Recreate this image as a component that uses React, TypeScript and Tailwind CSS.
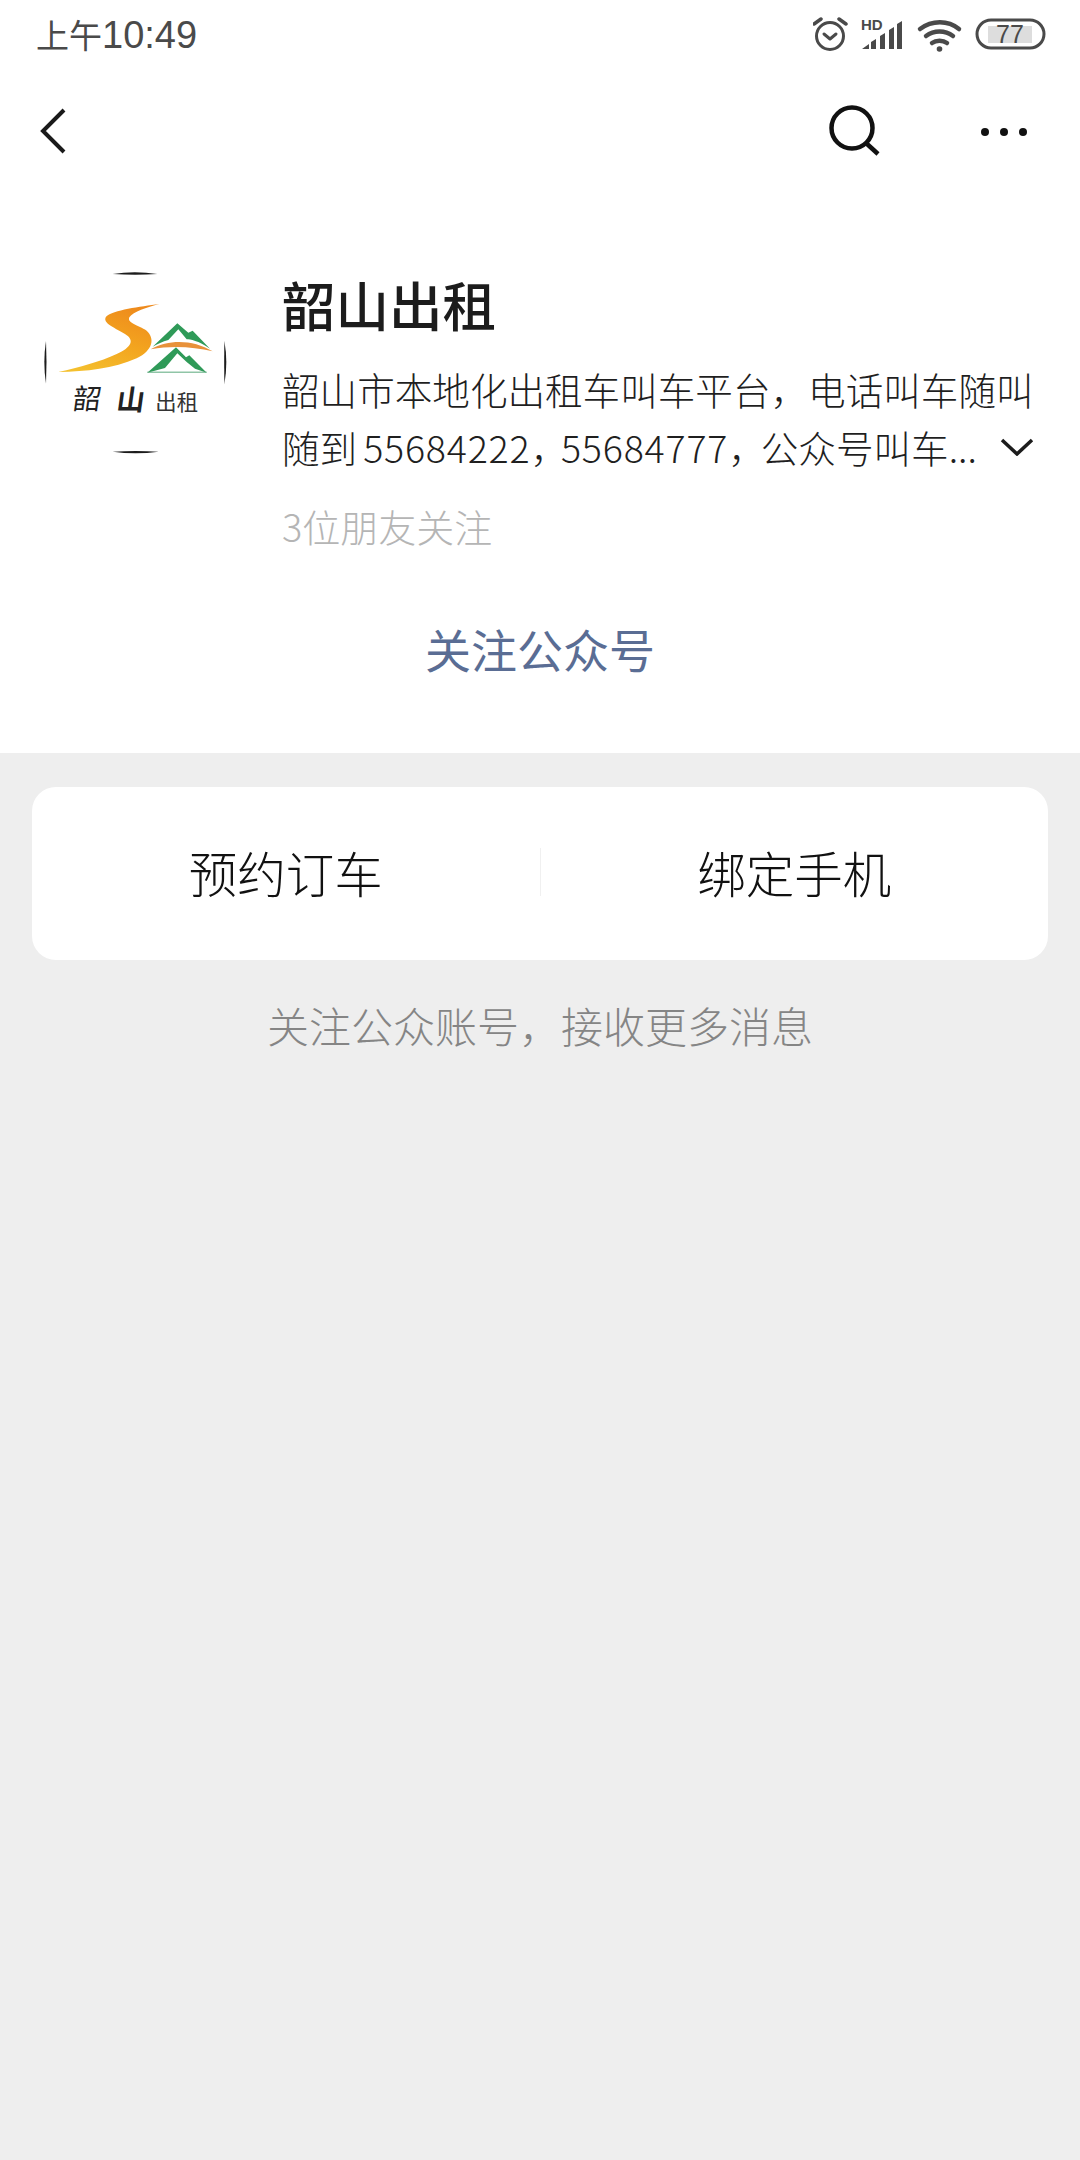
const cjk = "font-['Noto_Sans_CJK_SC','Noto_Sans',sans-serif]";

const StatusIcons = () => (
  <svg width="235" height="36" viewBox="0 0 235 36" className="block">
    {/* alarm */}
    <g fill="none" stroke="#4a4a4a" strokeWidth="3">
      <circle cx="17" cy="20" r="13.500" />
      <path d="M11 18l6 5 6-5" strokeLinecap="round" strokeLinejoin="round" />
      <path d="M1 8l7-5M33 8l-7-5" strokeWidth="3.500" strokeLinecap="round" />
    </g>
    {/* hd + signal */}
    <text x="48" y="14" fontFamily="Liberation Sans" fontWeight="700" fontSize="15" fill="#4a4a4a">HD</text>
    <path d="M49 33l7-5v5zM58 26l5-3v10h-5zM67 20l5-3v16h-5zM76 14l5-3v22h-5zM84 8l5-3v28h-5z" fill="#4a4a4a" />
    {/* wifi */}
    <g fill="none" stroke="#4a4a4a" strokeWidth="4.500" strokeLinecap="round">
      <path d="M107 13c12-9 28-9 39 0" />
      <path d="M113 20c8-6 19-6 27 0" />
      <path d="M119 27c4-3 11-3 15 0" />
    </g>
    <circle cx="126.500" cy="33" r="2.800" fill="#4a4a4a" />
    {/* battery */}
    <rect x="164" y="4" width="67" height="28" rx="14" fill="none" stroke="#4a4a4a" strokeWidth="3" />
    <rect x="175" y="10" width="44" height="17" fill="#dddddd" />
    <text x="197" y="27" textAnchor="middle" fontFamily="Liberation Sans" fontSize="25" fill="#4a4a4a">77</text>
  </svg>
);

const Logo = () => (
  <svg width="210" height="210" viewBox="0 0 630 630" className="block shrink-0">
    <defs>
      <linearGradient id="road" x1="0.700" y1="0" x2="0.200" y2="1">
        <stop offset="0" stopColor="#ee8a1c" />
        <stop offset="0.500" stopColor="#f3a51f" />
        <stop offset="1" stopColor="#f4c02e" />
      </linearGradient>
    </defs>
    <g fill="#1c1c1c">
      <path d="M248 42q66-10 134 0q-66 5-134 0z" />
      <path d="M248 575q68 10 138 0q-68-4-138 0z" />
      <path d="M48 243q-10 64 0 128q3-64 0-128z" />
      <path d="M583 243q12 64 0 130q-1-66 0-130z" />
    </g>
    <path d="M388 132C330 140 250 150 228 170C215 190 260 205 285 222C315 240 305 262 260 282C210 305 150 322 85 336C170 335 250 326 320 295C370 270 375 235 350 212C325 195 290 190 298 172C310 155 350 142 388 132z" fill="url(#road)" />
    <path d="M362 268C420 236 490 240 548 274C490 260 425 256 362 268z" fill="#e8913a" />
    <path d="M368 260L442 190L475 218L488 212L540 266C505 242 480 238 470 238L445 208L415 240C398 245 382 252 368 260z" fill="#2f9a58" />
    <path d="M352 338L438 262L468 292L478 286L530 338L495 326L470 306L442 280L405 324z" fill="#2f9a58" />
    <rect x="352" y="335" width="178" height="3" fill="#5aa97c" />
    <text x="126" y="448" fontFamily="Noto Sans CJK SC, sans-serif" fontSize="84" fill="#222222" transform="skewX(-8) translate(62 0)">韶</text>
    <text x="258" y="450" fontFamily="Noto Sans CJK SC, sans-serif" fontWeight="700" fontSize="84" fill="#222222" transform="skewX(-8) translate(62 0)">山</text>
    <text x="376" y="450" fontFamily="Noto Sans CJK SC, sans-serif" fontSize="64" fill="#333333">出租</text>
  </svg>
);

const App = () => {
  return (
    <div className={`w-[1080px] h-[2160px] bg-[#eeeeee] ${cjk}`}>
      <div className="bg-white h-[753px]">
        <div className="h-[68px] flex items-center justify-between pl-[36px] pr-[32px]">
          <span className="text-[33px] leading-[68px] text-[#4a4a4a]">
            上午<span className="font-['Liberation_Sans',sans-serif] text-[38px]">10:49</span>
          </span>
          <StatusIcons />
        </div>
        <div className="mt-[35px] h-[56px] flex items-center justify-between pl-[40px] pr-[53px]">
          <svg width="26" height="46" viewBox="0 0 26 46" fill="none" stroke="#1a1a1a" strokeWidth="4">
            <path d="M24 2L3 23l21 21" />
          </svg>
          <div className="flex items-center gap-[100px]">
            <svg width="52" height="52" viewBox="0 0 52 52" fill="none" stroke="#111111" strokeWidth="4.500">
              <circle cx="23" cy="23" r="20.500" />
              <path d="M37 38l12 11" />
            </svg>
            <svg width="46" height="10" viewBox="0 0 46 10" fill="#111111" className="mt-[2px]">
              <circle cx="4" cy="5" r="4" />
              <circle cx="23" cy="5" r="4" />
              <circle cx="42" cy="5" r="4" />
            </svg>
          </div>
        </div>
        <div className="flex pl-[30px] pr-[46px] pt-[101px]">
          <Logo />
          <div className="ml-[42px] flex-1 mt-[14px]">
            <h1 className="text-[53.500px] leading-[60px] font-medium text-[#1c1c1c]">韶山出租</h1>
            <div className="mt-[26px] text-[37.600px] leading-[58px] font-light text-[#1f1f1f] whitespace-nowrap">
              <p>韶山市本地化出租车叫车平台，电话叫车随叫</p>
              <div className="flex items-center justify-between">
                <p>
                  随到<span className="ml-[6px] tracking-[0.800px]">55684222</span>
                  <span className="tracking-[-7px]">，</span>
                  <span className="tracking-[0.800px]">55684777</span>
                  <span className="tracking-[-5px]">，</span>
                  公众号叫车...
                </p>
                <svg width="34" height="18" viewBox="0 0 34 18" fill="none" stroke="#1c1c1c" strokeWidth="3.500">
                  <path d="M2 2l15 14L32 2" />
                </svg>
              </div>
            </div>
            <p className="mt-[22px] text-[38px] leading-[56px] font-light text-[#b5b5b5]">3位朋友关注</p>
          </div>
        </div>
        <p className="text-center text-[46px] leading-[60px] text-[#5a6d94] mt-[64px]">关注公众号</p>
      </div>

      <div className="mx-[32px] mt-[34px] h-[173px] pb-[4px] bg-white rounded-[24px] flex items-center">
        <button className="flex-1 text-[48.500px] leading-[60px] font-light text-[#111111] text-center">预约订车</button>
        <div className="w-px h-[48px] bg-[#f0f0f0]" />
        <button className="flex-1 text-[48.500px] leading-[60px] font-light text-[#111111] text-center">绑定手机</button>
      </div>

      <p className="mt-[35px] text-center text-[42px] leading-[60px] font-light text-[#858585]">关注公众账号，接收更多消息</p>
    </div>
  );
};

export default App;
